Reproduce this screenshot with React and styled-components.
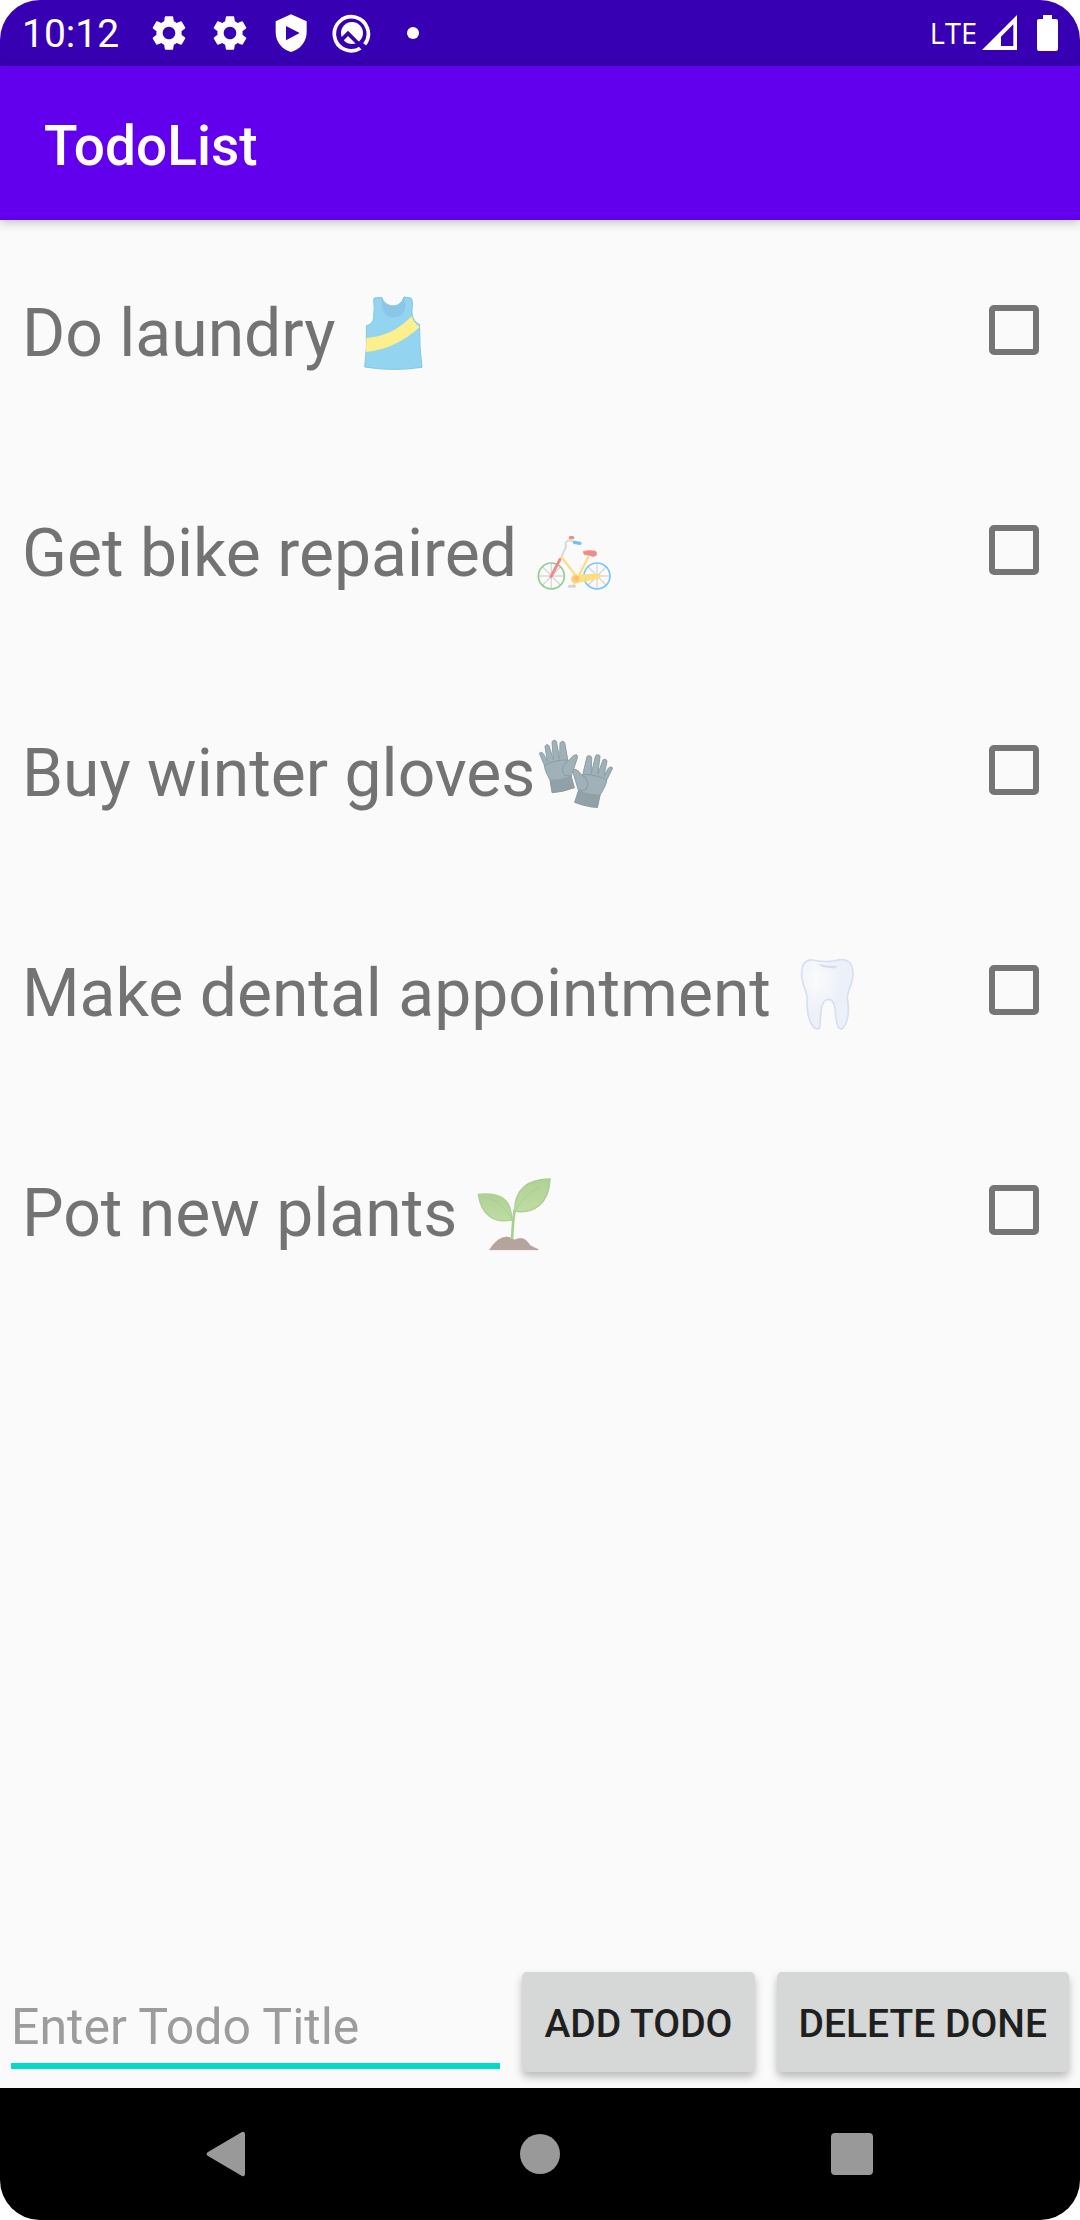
import React, { useState } from "react";
import styled, { createGlobalStyle } from "styled-components";
import { MdSettings } from "react-icons/md";

const GlobalStyle = createGlobalStyle`
  * { box-sizing: border-box; }
  body {
    margin: 0;
    background: #ffffff;
    font-family: Roboto, "Liberation Sans", sans-serif;
  }
`;

const Screen = styled.div`
  display: flex;
  flex-direction: column;
  min-height: 100vh;
  overflow: hidden;
  border-radius: 40px;
  background: #fafafa;
`;

const StatusBar = styled.header`
  display: flex;
  align-items: center;
  justify-content: space-between;
  height: 66px;
  padding: 0 22px;
  background: #3700b3;
  color: #ffffff;
`;

const StatusGroup = styled.div`
  display: flex;
  align-items: center;
  gap: ${(p) => p.$gap || 0}px;
`;

const Clock = styled.time`
  width: 116px;
  padding-top: 2px;
  font-size: 39px;
  line-height: 44px;
`;

const IconSlot = styled.span`
  display: flex;
  align-items: center;
  justify-content: center;
  width: 61px;
  height: 42px;
`;

const Dot = styled.span`
  width: 12px;
  height: 12px;
  border-radius: 50%;
  background: #ffffff;
`;

const Network = styled.span`
  font-family: "Open Sans", "Noto Sans", sans-serif;
  font-size: 29px;
  font-weight: 400;
  line-height: 40px;
`;

const AppBar = styled.div`
  display: flex;
  align-items: center;
  height: 154px;
  padding: 5px 44px 0;
  background: #6200ee;
  box-shadow: 0 2px 10px rgba(0, 0, 0, 0.25);
`;

const Title = styled.h1`
  margin: 0;
  color: #ffffff;
  font-size: 55px;
  font-weight: 500;
  line-height: 64px;
`;

const List = styled.ul`
  flex: 1;
  margin: 0;
  padding: 0;
  list-style: none;
`;

const Row = styled.li`
  display: flex;
  align-items: center;
  justify-content: space-between;
  height: 220px;
  padding: 0 41px 0 22px;
`;

const RowLabel = styled.label`
  display: flex;
  align-items: center;
  padding-top: 8px;
  color: #737373;
  font-size: 66px;
  line-height: 80px;
  white-space: pre;
`;

const Picture = styled.svg`
  width: 82px;
  height: 82px;
`;

const Tick = styled.input`
  appearance: none;
  width: 50px;
  height: 50px;
  margin: 0;
  border: 6px solid #757575;
  border-radius: 5px;
  &:checked {
    border-color: #03dac5;
    background: #03dac5;
  }
`;

const Form = styled.form`
  display: flex;
  align-items: flex-start;
  gap: 22px;
  padding: 0 11px 16px;
`;

const Field = styled.input`
  flex: 1;
  min-width: 0;
  height: 97px;
  padding: 18px 0 0;
  border: 0;
  border-bottom: 6px solid #03dac5;
  outline: 0;
  background: transparent;
  color: #1f1f1f;
  font: 400 50px Roboto, "Liberation Sans", sans-serif;
  &::placeholder {
    color: #9c9c9c;
    opacity: 1;
  }
`;

const Action = styled.button`
  height: 100px;
  padding: 4px 22px 0;
  border: 0;
  border-radius: 5px;
  background: #d6d7d7;
  box-shadow: 0 5px 8px rgba(0, 0, 0, 0.26);
  color: #1f1f1f;
  font: 500 39px Roboto, "Liberation Sans", sans-serif;
  text-transform: uppercase;
  white-space: nowrap;
`;

const NavBar = styled.nav`
  display: grid;
  grid-template-columns: repeat(3, 1fr);
  height: 132px;
  padding: 0 72px;
  background: #000000;
`;

const NavButton = styled.button`
  display: flex;
  align-items: center;
  justify-content: center;
  padding: 0;
  border: 0;
  background: transparent;
  color: #999999;
`;

const Shirt = () => (
  <Picture viewBox="30 39 246 246" aria-hidden="true">
    <path d="M97 54L119 52Q127 77 155 78Q178 76 186 51L207 54Q212 57 211 75C209 100 207 119 233 134V140Q232 205 240 262Q155 275 68 261Q76 200 73 137Q93 132 95 113Q98 80 95 58Z" fill="#93d4f1" stroke="#85c6e4" strokeWidth="3" strokeLinejoin="round" />
    <path d="M119 53Q127 77 155 78Q178 76 186 51L190 70C193 99 175 113 154 112C125 111 117 86 119 53Z" fill="#8ac6e8" stroke="#9fc9dc" strokeWidth="2" />
    <path d="M73 174Q150 170 209 109Q214 127 233 141Q160 208 72 216Z" fill="#fdef8c" />
  </Picture>
);

const Bike = () => (
  <Picture viewBox="30 9 246 246" fill="none" strokeLinecap="round" aria-hidden="true">
    <g stroke="#d8d8d8" strokeWidth="4">
      <path d="M48 198H122M85 161V236M59 171L112 225M112 171L59 225" />
      <path d="M185 198H259M222 161V236M196 171L249 225M249 171L196 225" />
    </g>
    <circle cx="85" cy="198" r="39" stroke="#8fcf94" strokeWidth="5" />
    <circle cx="222" cy="198" r="39" stroke="#7cc5f2" strokeWidth="5" />
    <path d="M114 144L124 120Q131 112 128 101Q127 90 145 92L153 95" stroke="#d9d9dc" strokeWidth="6" />
    <path d="M111 148L84 200" stroke="#f08c87" strokeWidth="9" />
    <path d="M197 139L169 194M116 142L162 201" stroke="#fbdf82" strokeWidth="7" />
    <path d="M160 196L226 193Q234 198 228 205L162 217Z" fill="#fbdf82" stroke="#fbdf82" strokeWidth="4" />
    <path d="M160 207L151 227" stroke="#fbdf82" strokeWidth="4" />
    <circle cx="158" cy="207" r="12" fill="#fbcf75" stroke="#fbd77d" strokeWidth="3" />
    <circle cx="161" cy="205" r="7" fill="#fdbb70" />
    <path d="M139 229H155" stroke="#d5d5d5" strokeWidth="9" />
    <path d="M154 97L171 100" stroke="#70c3ef" strokeWidth="10" />
    <path d="M142 83H149" stroke="#f08c87" strokeWidth="10" />
    <path d="M182 124Q197 120 217 123Q223 127 220 136Q211 143 200 136L184 134Q179 130 182 124Z" fill="#f08c87" stroke="#ee9590" strokeWidth="2" />
  </Picture>
);

const Glove = ({ transform }) => (
  <g transform={transform}>
    <path d="M78 165L84 203Q118 201 151 188L141 151Z" fill="#92a1a8" stroke="#8b9aa1" strokeWidth="3" strokeLinejoin="round" />
    <path d="M46 85Q52 78 58 86L70 109L63 64Q68 54 75 62L88 104L84 50Q90 41 97 49L107 102L108 54Q115 44 122 52L131 103L134 108Q147 88 158 89Q163 95 158 105L142 152Q110 169 78 165Q61 135 61 120Z" fill="#a1b1b8" stroke="#8e9fa7" strokeWidth="3" strokeLinejoin="round" />
    <path d="M62 121Q92 104 132 105M132 108Q112 119 117 143Q121 156 138 150" fill="none" stroke="#8b9ca4" strokeWidth="3" />
  </g>
);

const Gloves = () => (
  <Picture viewBox="33 24 246 246" aria-hidden="true">
    <Glove />
    <Glove transform="matrix(-1.03 -0.01 -0.05 1 317 45)" />
  </Picture>
);

const Tooth = () => (
  <Picture viewBox="21 39 246 246" aria-hidden="true">
    <defs>
      <radialGradient id="enamel" cx="28%" cy="28%" r="50%">
        <stop offset="0" stopColor="#fbfbfc" />
        <stop offset="1" stopColor="#ecf0f8" />
      </radialGradient>
    </defs>
    <path d="M99 60Q145 70 180 59C207 56 220 74 219 104C218 135 202 150 202 174C209 215 204 246 189 264Q181 272 174 260C162 232 172 184 148 178C119 178 124 218 119 263Q112 271 102 263C82 240 79 208 82 172C75 141 65 128 65 104C64 73 77 57 99 60Z" fill="url(#enamel)" stroke="#d7e0f1" strokeWidth="5" />
    <path d="M119 74Q139 80 170 79Q170 85 154 83Q125 81 119 74Z" fill="#cfdbef" stroke="#d2def0" strokeWidth="3" />
  </Picture>
);

const Plant = () => (
  <Picture viewBox="45 39 246 246" aria-hidden="true">
    <defs>
      <linearGradient id="leaf" x1="0" x2="0" y1="0" y2="1">
        <stop offset="0" stopColor="#b0d196" />
        <stop offset="1" stopColor="#bfdca3" />
      </linearGradient>
    </defs>
    <path d="M92 269Q113 233 143 231Q158 233 166 240Q187 230 202 242L214 257Q226 263 238 269Z" fill="#b5a49d" stroke="#ac9b94" strokeWidth="2" />
    <path d="M159 238Q162 180 167 149" fill="none" stroke="#a6cf90" strokeWidth="8" />
    <path d="M58 103C97 99 136 106 150 137Q157 154 159 180C104 191 67 164 58 103Z" fill="url(#leaf)" stroke="#a6cf90" strokeWidth="4" />
    <path d="M273 57C210 57 166 85 167 154C226 162 271 129 273 57Z" fill="url(#leaf)" stroke="#a6cf90" strokeWidth="4" />
    <path d="M66 110Q121 115 154 169M239 81Q194 106 170 151" fill="none" stroke="#a6cf90" strokeWidth="3" />
  </Picture>
);

const ShieldIcon = () => (
  <svg width="42" height="42" viewBox="808 36 126 126" aria-hidden="true">
    <path fill="#fff" fillRule="evenodd" d="M871 43L918 64V97C918 125 898 149 871 156C844 149 825 125 825 97V64ZM856 78V121L897 99Z" />
  </svg>
);

const SearchRingIcon = () => (
  <svg width="42" height="42" viewBox="991 36 126 126" fill="none" aria-hidden="true">
    <path d="M1092 133A51 51 0 1 0 1080 144" stroke="#fff" strokeWidth="11" />
    <circle cx="1054" cy="99" r="33" fill="#fff" />
    <path d="M1018 124L1042 100L1092 150" stroke="#3700b3" strokeWidth="11" />
  </svg>
);

const SignalIcon = () => (
  <svg width="35" height="36" viewBox="0 0 105 108" aria-hidden="true">
    <path fill="#fff" fillRule="evenodd" d="M0 105L105 0V105ZM57 93H94V28L57 65Z" />
  </svg>
);

const BatteryIcon = () => (
  <svg width="21" height="36" viewBox="0 0 21 36" aria-hidden="true">
    <path fill="#fff" d="M6 0H15V4H19Q21 4 21 6V34Q21 36 19 36H2Q0 36 0 34V6Q0 4 2 4H6Z" />
  </svg>
);

const todos = [
  { id: "laundry", title: "Do laundry ", Art: Shirt },
  { id: "bike", title: "Get bike repaired ", Art: Bike },
  { id: "gloves", title: "Buy winter gloves", Art: Gloves },
  { id: "dental", title: "Make dental appointment ", Art: Tooth },
  { id: "plants", title: "Pot new plants ", Art: Plant },
];

export default function App() {
  const [items, setItems] = useState(todos);
  const [done, setDone] = useState({});
  const [draft, setDraft] = useState("");

  const addTodo = (event) => {
    event.preventDefault();
    if (!draft.trim()) return;
    setItems([...items, { id: `todo-${Date.now()}`, title: draft.trim() }]);
    setDraft("");
  };

  return (
    <>
      <GlobalStyle />
      <Screen>
        <StatusBar>
          <StatusGroup>
            <Clock>10:12</Clock>
            <IconSlot><MdSettings size={42} /></IconSlot>
            <IconSlot><MdSettings size={42} /></IconSlot>
            <IconSlot><ShieldIcon /></IconSlot>
            <IconSlot><SearchRingIcon /></IconSlot>
            <IconSlot><Dot /></IconSlot>
          </StatusGroup>
          <StatusGroup $gap={20}>
            <StatusGroup $gap={5}>
              <Network>LTE</Network>
              <SignalIcon />
            </StatusGroup>
            <BatteryIcon />
          </StatusGroup>
        </StatusBar>
        <AppBar>
          <Title>TodoList</Title>
        </AppBar>
        <List>
          {items.map(({ id, title, Art }) => (
            <Row key={id}>
              <RowLabel htmlFor={id}>
                {title}
                {Art && <Art />}
              </RowLabel>
              <Tick
                id={id}
                type="checkbox"
                checked={!!done[id]}
                onChange={(e) => setDone({ ...done, [id]: e.target.checked })}
              />
            </Row>
          ))}
        </List>
        <Form onSubmit={addTodo}>
          <Field
            aria-label="Enter Todo Title"
            placeholder="Enter Todo Title"
            value={draft}
            onChange={(e) => setDraft(e.target.value)}
          />
          <Action type="submit">Add Todo</Action>
          <Action type="button" onClick={() => setItems(items.filter((t) => !done[t.id]))}>
            Delete Done
          </Action>
        </Form>
        <NavBar>
          <NavButton aria-label="Back">
            <svg width="44" height="46" viewBox="0 0 44 46" aria-hidden="true">
              <path d="M36 1Q39 0 39 4V42Q39 46 36 45L2 25Q-1 23 2 21Z" fill="currentColor" />
            </svg>
          </NavButton>
          <NavButton aria-label="Home">
            <svg width="40" height="40" viewBox="0 0 40 40" aria-hidden="true">
              <circle cx="20" cy="20" r="20" fill="currentColor" />
            </svg>
          </NavButton>
          <NavButton aria-label="Recent apps">
            <svg width="42" height="42" viewBox="0 0 42 42" aria-hidden="true">
              <rect width="42" height="42" rx="4" fill="currentColor" />
            </svg>
          </NavButton>
        </NavBar>
      </Screen>
    </>
  );
}
